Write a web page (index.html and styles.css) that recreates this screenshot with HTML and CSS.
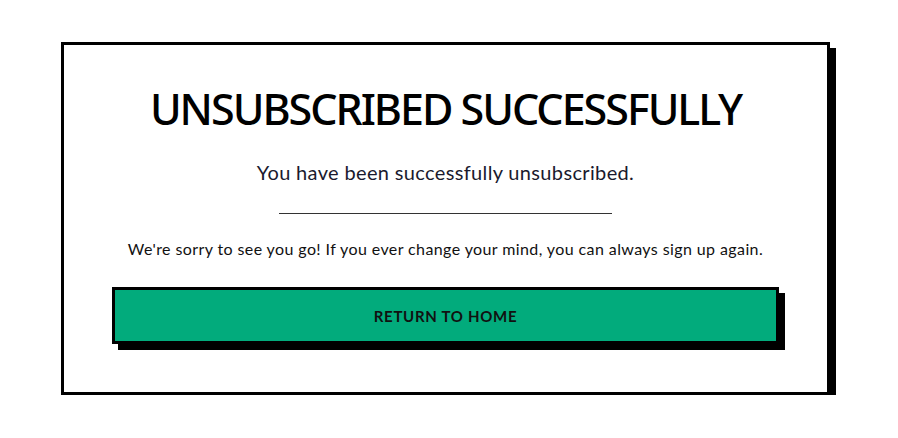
FILE: index.html
```html
<!DOCTYPE html>
<html lang="en">
<head>
<meta charset="utf-8">
<title>Unsubscribed</title>
<link rel="stylesheet" href="styles.css">
</head>
<body>
<main class="page">
  <section class="card">
    <h1 class="title">UNSUBSCRIBED SUCCESSFULLY</h1>
    <p class="subtitle">You have been successfully unsubscribed.</p>
    <hr class="divider">
    <p class="note">We're sorry to see you go! If you ever change your mind, you can always sign up again.</p>
    <a class="button" href="#">RETURN TO HOME</a>
  </section>
</main>
</body>
</html>
```

FILE: styles.css
```css
* { box-sizing: border-box; }
html, body { margin: 0; padding: 0; background: #fff; }
body { font-family: Lato, "Noto Sans", sans-serif; color: #000; }
.page { padding: 42px 0 0 61px; }
.card {
  width: 769px;
  border: 3px solid #000;
  box-shadow: 6px 6px 0 #000;
  background: #fff;
  padding: 38px 48px 48px;
  display: flex;
  flex-direction: column;
  align-items: center;
  text-align: center;
}
.title {
  margin: 0;
  font-family: "Noto Sans", "Open Sans", sans-serif;
  font-weight: 500;
  font-size: 43px;
  line-height: 52px;
  letter-spacing: -2px;
  color: #000;
}
.subtitle {
  margin: 23px 0 0;
  font-size: 20px;
  line-height: 28px;
  letter-spacing: 0.35px;
  color: #1a1a2e;
}
.divider {
  width: 333px;
  margin: 27px 0 0;
  border: 0;
  border-top: 1px solid #333;
  height: 0;
}
.note {
  margin: 24px 0 0;
  font-size: 16px;
  line-height: 22px;
  letter-spacing: 0.4px;
  color: #111;
}
.button {
  align-self: stretch;
  margin-top: 27px;
  height: 57px;
  display: flex;
  align-items: center;
  justify-content: center;
  background: #02ab7c;
  border: 3px solid #000;
  box-shadow: 6px 6px 0 #000;
  color: #111;
  font-weight: 700;
  font-size: 15px;
  letter-spacing: 0.7px;
  text-decoration: none;
}
```
